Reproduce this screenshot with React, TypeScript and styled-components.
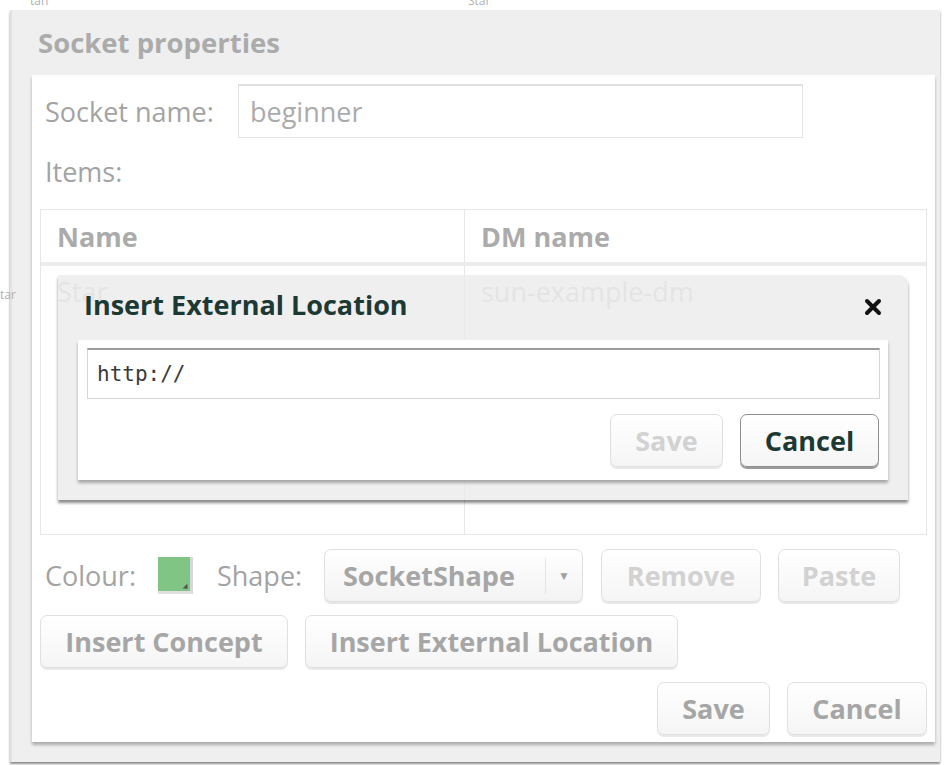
import styled, { createGlobalStyle, css } from "styled-components";

const GlobalStyle = createGlobalStyle`
  html, body {
    margin: 0;
    background: #ffffff;
  }
  * {
    box-sizing: border-box;
  }
`;

const sans = `"Open Sans", "Noto Sans", sans-serif`;

const Page = styled.div`
  position: relative;
  width: 944px;
  height: 765px;
  overflow: hidden;
  padding: 10px 4px 3px 10px;
  font-family: ${sans};
`;

/* labels of the diagram nodes lying under the dialog */
const NodeLabel = styled.span<{ $x: number; $y: number }>`
  position: absolute;
  z-index: 2;
  left: ${(p) => p.$x}px;
  top: ${(p) => p.$y}px;
  font-size: 12px;
  color: #b0b0b0;
`;

const Dialog = styled.div`
  position: relative;
  height: 752px;
  background: #efefef;
  border-left: 2px solid #e2e2e2;
  box-shadow: 0 2px 2px rgba(0, 0, 0, 0.45);
  display: flex;
  flex-direction: column;
`;

const DialogTitle = styled.h2`
  margin: 0;
  height: 65px;
  padding-left: 26px;
  display: flex;
  align-items: center;
  font-size: 27.5px;
  font-weight: 700;
  color: #ababab;
`;

const DialogBody = styled.div`
  margin: 0 5px 0 20px;
  height: 667px;
  background: #ffffff;
  box-shadow: 0 3px 3px rgba(0, 0, 0, 0.28);
  padding: 9px 8px 7px 8px;
  display: flex;
  flex-direction: column;
`;

const FieldRow = styled.div`
  display: flex;
  align-items: center;
  height: 54px;
`;

const Label = styled.span<{ $width?: number; $indent?: number }>`
  font-size: 27px;
  color: #a3a3a3;
  padding-left: ${(p) => p.$indent ?? 5}px;
  white-space: nowrap;
  ${(p) =>
    p.$width &&
    css`
      width: ${p.$width}px;
      flex-shrink: 0;
    `}
`;

const TextInput = styled.div`
  width: 565px;
  height: 54px;
  border: 1px solid #e4e4e4;
  border-top: 2px solid #dedede;
  padding-left: 11px;
  display: flex;
  align-items: center;
  font-size: 27px;
  color: #ababab;
`;

const ItemsLabel = styled(Label)`
  display: block;
  line-height: 34px;
  padding-top: 17px;
  padding-bottom: 20px;
`;

const Table = styled.div`
  position: relative;
  height: 327px;
  border: 1px solid #e6e6e6;
  display: flex;
  flex-direction: column;
`;

const TableRow = styled.div<{ $head?: boolean; $fill?: boolean }>`
  display: grid;
  grid-template-columns: 424px 1fr;
  height: ${(p) => (p.$head ? "56px" : "50px")};
  ${(p) => p.$head && "border-bottom: 4px solid #ececec;"}
  ${(p) => p.$fill && "flex: 1;"}
`;

const Cell = styled.div<{ $head?: boolean }>`
  display: flex;
  align-items: center;
  padding-left: 16px;
  font-size: 27px;
  font-weight: ${(p) => (p.$head ? 700 : 400)};
  color: ${(p) => (p.$head ? "#ababab" : "#c8c8c8")};
  white-space: nowrap;

  &:first-child {
    border-right: 1px solid #e6e6e6;
  }
`;

const ControlRow = styled.div<{ $gap: number; $top: number; $end?: boolean }>`
  display: flex;
  align-items: center;
  gap: ${(p) => p.$gap}px;
  margin-top: ${(p) => p.$top}px;
  height: 53px;
  flex-shrink: 0;
  ${(p) => p.$end && "justify-content: flex-end;"}
`;

type Tone = "faded" | "disabled" | "strong";

const toneColor: Record<Tone, string> = {
  faded: "#a6a6a6",
  disabled: "#d2d2d2",
  strong: "#1d3934",
};

const Button = styled.button<{ $w: number; $tone?: Tone }>`
  width: ${(p) => p.$w}px;
  height: 53px;
  padding: 0;
  border-radius: 7px;
  border: 1px solid ${(p) => (p.$tone === "strong" ? "#8e8e8e" : "#e0e0e0")};
  background: linear-gradient(#ffffff, #f5f5f5);
  box-shadow: 0 2px 0 ${(p) => (p.$tone === "strong" ? "#9a9a9a" : "#e8e8e8")};
  font-family: ${sans};
  font-size: 27px;
  font-weight: 700;
  color: ${(p) => toneColor[p.$tone ?? "faded"]};
  white-space: nowrap;
  flex-shrink: 0;
`;

const Swatch = styled.div`
  position: relative;
  width: 35px;
  height: 37px;
  flex-shrink: 0;
  background: #80c583;
  border-right: 3px solid #d8d8d8;
  border-bottom: 3px solid #e0e0e0;

  &::after {
    content: "";
    position: absolute;
    right: 1px;
    bottom: 1px;
    border-left: 4px solid transparent;
    border-top: 4px solid transparent;
    border-right: 4px solid #555;
    border-bottom: 4px solid #555;
    transform: scale(0.6);
  }
`;

const Select = styled.div`
  width: 259px;
  height: 53px;
  margin-right: 1px;
  border: 1px solid #e0e0e0;
  border-radius: 7px;
  background: linear-gradient(#ffffff, #f3f3f3);
  box-shadow: 0 2px 0 #e6e6e6;
  display: grid;
  grid-template-columns: 221px 1fr;
  align-items: center;
  font-size: 27px;
  font-weight: 700;
  color: #a6a6a6;
  flex-shrink: 0;
`;

const SelectValue = styled.span`
  padding-left: 18px;
  border-right: 1px solid #e4e4e4;
  line-height: 36px;
  white-space: nowrap;
`;

const SelectCaret = styled.span`
  text-align: center;
  font-size: 12px;
  color: #a0a0a0;
`;

/* modal prompt for an external URL, shown over the items table */
const Modal = styled.div`
  position: absolute;
  left: 17px;
  top: 65px;
  width: 850px;
  height: 225px;
  background: rgba(235, 235, 235, 0.8);
  border-radius: 0 9px 0 0;
  box-shadow: 0 3px 3px rgba(0, 0, 0, 0.45);
  display: flex;
  flex-direction: column;
`;

const ModalHeader = styled.div`
  height: 65px;
  padding: 0 25px 0 26px;
  display: flex;
  align-items: center;
  justify-content: space-between;
`;

const ModalTitle = styled.h3`
  margin: 0;
  margin-top: -6px;
  font-size: 27px;
  font-weight: 700;
  color: #1d3934;
`;

const ModalBody = styled.div`
  margin: 0 20px;
  height: 140px;
  background: #ffffff;
  box-shadow: 0 3px 3px rgba(0, 0, 0, 0.3);
  padding: 8px 8px 13px 9px;
  display: flex;
  flex-direction: column;
`;

const UrlInput = styled.div`
  height: 52px;
  border: 1px solid #d6d6d6;
  border-top: 2px solid #9c9c9c;
  padding-left: 9px;
  display: flex;
  align-items: center;
  font-family: "DejaVu Sans Mono", monospace;
  font-size: 21px;
  color: #3a3a3a;
`;

const ModalActions = styled.div`
  margin-top: 15px;
  display: flex;
  justify-content: flex-end;
  gap: 17px;
  padding-right: 1px;
`;

const CloseIcon = () => (
  <svg width="20" height="18" viewBox="0 0 20 18" style={{ marginTop: -2 }}>
    <path d="M4 3 L16 15 M16 3 L4 15" stroke="#121212" strokeWidth="4" strokeLinecap="round" />
  </svg>
);

export default function App() {
  return (
    <Page>
      <GlobalStyle />
      <NodeLabel $x={30} $y={-8}>tan</NodeLabel>
      <NodeLabel $x={468} $y={-8}>Star</NodeLabel>
      <NodeLabel $x={0} $y={286}>tar</NodeLabel>
      <Dialog>
        <DialogTitle>Socket properties</DialogTitle>
        <DialogBody>
          <FieldRow>
            <Label $width={198}>Socket name:</Label>
            <TextInput>beginner</TextInput>
          </FieldRow>
          <ItemsLabel>Items:</ItemsLabel>
          <Table>
            <TableRow $head>
              <Cell $head>Name</Cell>
              <Cell $head>DM name</Cell>
            </TableRow>
            <TableRow>
              <Cell>Star</Cell>
              <Cell>sun-example-dm</Cell>
            </TableRow>
            <TableRow $fill>
              <Cell />
              <Cell />
            </TableRow>
            <Modal>
              <ModalHeader>
                <ModalTitle>Insert External Location</ModalTitle>
                <CloseIcon />
              </ModalHeader>
              <ModalBody>
                <UrlInput>http://</UrlInput>
                <ModalActions>
                  <Button $w={113} $tone="disabled">Save</Button>
                  <Button $w={139} $tone="strong">Cancel</Button>
                </ModalActions>
              </ModalBody>
            </Modal>
          </Table>
          <ControlRow $gap={0} $top={14}>
            <Label $width={118}>Colour:</Label>
            <Swatch />
            <Label $width={131} $indent={24}>Shape:</Label>
            <Select>
              <SelectValue>SocketShape</SelectValue>
              <SelectCaret>▼</SelectCaret>
            </Select>
            <Button $w={160} $tone="disabled" style={{ marginLeft: 17 }}>Remove</Button>
            <Button $w={122} $tone="disabled" style={{ marginLeft: 17 }}>Paste</Button>
          </ControlRow>
          <ControlRow $gap={17} $top={13}>
            <Button $w={248}>Insert Concept</Button>
            <Button $w={373}>Insert External Location</Button>
          </ControlRow>
          <ControlRow $gap={17} $top={14} $end>
            <Button $w={113}>Save</Button>
            <Button $w={140}>Cancel</Button>
          </ControlRow>
        </DialogBody>
      </Dialog>
    </Page>
  );
}
